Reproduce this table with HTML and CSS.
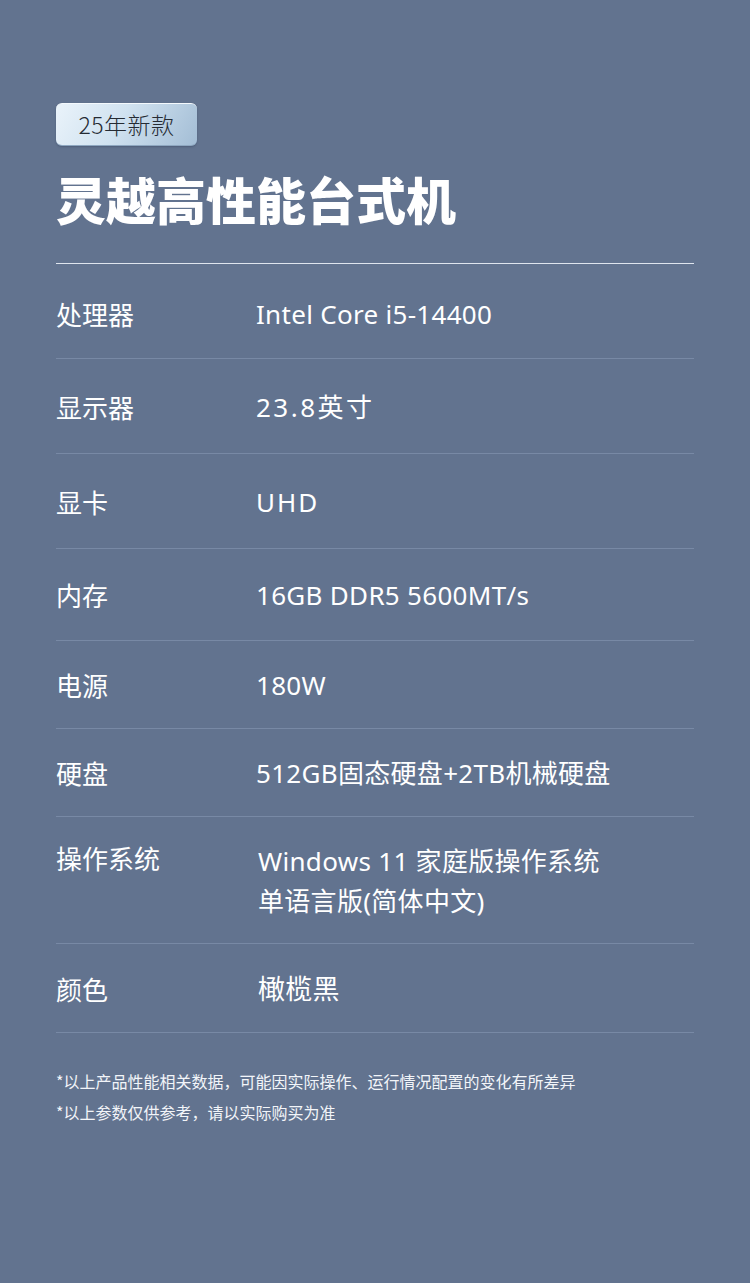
FILE: index.html
```html
<!DOCTYPE html>
<html lang="zh-CN">
<head>
<meta charset="utf-8">
<title>灵越高性能台式机</title>
<link rel="stylesheet" href="styles.css">
</head>
<body>
<main class="page">
  <div class="badge">25年新款</div>
  <h1 class="title">灵越高性能台式机</h1>
  <div class="rule"></div>
  <div class="specs">
    <div class="row h95 first"><div class="label">处理器</div><div class="value">Intel Core i5-14400</div></div>
    <div class="row h95"><div class="label">显示器</div><div class="value spaced">23.8英寸</div></div>
    <div class="row h95"><div class="label">显卡</div><div class="value spaced-wide">UHD</div></div>
    <div class="row h92"><div class="label">内存</div><div class="value">16GB DDR5 5600MT/s</div></div>
    <div class="row h88"><div class="label">电源</div><div class="value">180W</div></div>
    <div class="row h88"><div class="label">硬盘</div><div class="value">512GB固态硬盘+2TB机械硬盘</div></div>
    <div class="row h127 top"><div class="label">操作系统</div><div class="value multi">Windows 11 家庭版操作系统<br>单语言版(简体中文)</div></div>
    <div class="row h89"><div class="label">颜色</div><div class="value cjk">橄榄黑</div></div>
  </div>
  <div class="notes">
    <p>*以上产品性能相关数据，可能因实际操作、运行情况配置的变化有所差异</p>
    <p>*以上参数仅供参考，请以实际购买为准</p>
  </div>
</main>
</body>
</html>
```

FILE: styles.css
```css
html, body {
  margin: 0;
  padding: 0;
}
body {
  background: #62738f;
  width: 750px;
  height: 1283px;
  overflow: hidden;
  font-family: "Noto Sans", "Noto Sans CJK SC", sans-serif;
  color: #ffffff;
}
.page {
  padding: 103px 56px 0 56px;
}
.badge {
  width: 141px;
  height: 43px;
  box-sizing: border-box;
  border-radius: 6px;
  background: linear-gradient(120deg, #eaf3fa 0%, #d0e2f0 45%, #a3bdd5 100%);
  border-top: 1px solid #f4f9fd;
  border-bottom: 1px solid #8ea7c0;
  box-shadow: 0 1px 2px rgba(40, 55, 80, 0.35);
  color: #252b33;
  font-family: "Noto Sans CJK SC", sans-serif;
  font-weight: 300;
  font-size: 23px;
  line-height: 40px;
  text-align: center;
  letter-spacing: 0.5px;
}
.title {
  margin: 22px 0 0 0;
  font-family: "Noto Sans CJK SC", sans-serif;
  font-weight: 900;
  font-size: 50px;
  line-height: 60px;
  letter-spacing: 0;
  color: #ffffff;
}
.rule {
  margin-top: 35px;
  height: 1px;
  background: #dfe5ee;
}
.row {
  display: flex;
  align-items: center;
  box-sizing: border-box;
  border-bottom: 1px solid #7889a5;
  padding-top: 1px;
}
.row.first {
  padding-top: 5px;
}
.row.top {
  align-items: flex-start;
  padding-top: 24px;
}
.h95 { height: 95px; }
.h92 { height: 92px; }
.h88 { height: 88px; }
.h89 { height: 89px; }
.h127 { height: 127px; }
.label {
  width: 200px;
  flex: none;
  font-family: "Noto Sans CJK SC", sans-serif;
  font-size: 26px;
  line-height: 34px;
}
.value {
  font-size: 26px;
  line-height: 34px;
  letter-spacing: 0.3px;
}
.cjk {
  padding-left: 2px;
  font-size: 27px;
}
.spaced { letter-spacing: 2.5px; }
.spaced-wide { letter-spacing: 2px; }
.multi {
  line-height: 40px;
  padding-left: 2px;
}
.notes {
  padding-top: 33px;
}
.notes p {
  margin: 0;
  font-family: "Noto Sans CJK SC", sans-serif;
  font-size: 16px;
  line-height: 31px;
  color: #f2f5f9;
}
```
